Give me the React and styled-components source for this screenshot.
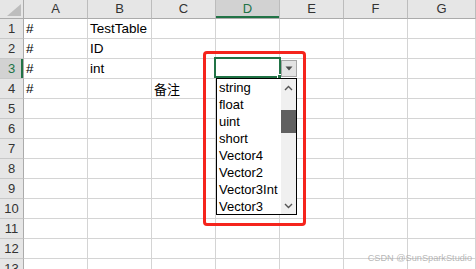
import React from "react";
import styled, { createGlobalStyle } from "styled-components";

const GREEN = "#217346";

const Global = createGlobalStyle`
  html, body { margin: 0; padding: 0; background: #fff; }
  #root { width: 476px; height: 269px; overflow: hidden; position: relative; }
`;

const Sheet = styled.div`
  display: grid;
  grid-template-columns: 24px repeat(6, 64px) 68px;
  grid-template-rows: 19px;
  grid-auto-rows: 20px;
  font-family: "Liberation Sans", Arial, sans-serif;
  width: 476px;
`;

const Corner = styled.div`
  box-sizing: border-box;
  background: #e6e6e6;
  border-right: 1px solid #ababab;
  border-bottom: 1px solid #ababab;
  display: flex;
  align-items: flex-end;
  justify-content: flex-end;
  padding: 0 1px 1px 0;
`;

const ColHeader = styled.div`
  box-sizing: border-box;
  background: ${(p) => (p.$active ? "#d2d2d2" : "#e6e6e6")};
  color: ${(p) => (p.$active ? GREEN : "#333")};
  border-right: 1px solid #bcbcbc;
  border-bottom: 1px solid #ababab;
  box-shadow: ${(p) => (p.$active ? `inset 0 -2px 0 ${GREEN}` : "none")};
  font-size: 13px;
  line-height: 18px;
  text-align: center;
`;

const RowHeader = styled.div`
  box-sizing: border-box;
  background: ${(p) => (p.$active ? "#d2d2d2" : "#e6e6e6")};
  color: ${(p) => (p.$active ? GREEN : "#333")};
  border-right: 1px solid #ababab;
  border-bottom: 1px solid #c8c8c8;
  box-shadow: ${(p) => (p.$active ? `inset -2px 0 0 ${GREEN}` : "none")};
  font-size: 13px;
  line-height: 19px;
  text-align: center;
`;

const Cell = styled.div`
  box-sizing: border-box;
  position: relative;
  border-right: 1px solid #d4d4d4;
  border-bottom: 1px solid #d4d4d4;
  padding: 1px 0 0 2px;
  font-size: 13.5px;
  line-height: 18px;
  color: #000;
  white-space: nowrap;
  font-family: ${(p) =>
    p.$cjk
      ? `"Noto Sans CJK SC", "Liberation Sans", sans-serif`
      : `"Liberation Sans", Arial, sans-serif`};
  font-size: ${(p) => (p.$cjk ? "13px" : "13.5px")};
`;

const Selection = styled.div`
  position: absolute;
  left: -2px;
  top: -2px;
  width: 67px;
  height: 21px;
  box-sizing: border-box;
  border: 2px solid ${GREEN};
  z-index: 3;
`;

const FillHandle = styled.div`
  position: absolute;
  right: -3px;
  bottom: -3px;
  width: 5px;
  height: 5px;
  background: ${GREEN};
  border: 1px solid #fff;
  box-sizing: border-box;
`;

const DropButton = styled.div`
  position: absolute;
  left: 65px;
  top: 1px;
  width: 16px;
  height: 17px;
  box-sizing: border-box;
  background: #e3e3e3;
  border: 1px solid #a6a6a6;
  display: flex;
  align-items: center;
  justify-content: center;
  z-index: 4;
`;

const ListBox = styled.div`
  position: absolute;
  left: 0;
  top: 19px;
  width: 81px;
  height: 137px;
  box-sizing: border-box;
  border: 1px solid #000;
  background: #fff;
  display: flex;
  z-index: 5;
`;

const Items = styled.div`
  flex: 1;
  display: flex;
  flex-direction: column;
  padding-left: 2px;
  overflow: hidden;
`;

const Item = styled.div`
  height: 17px;
  line-height: 17px;
  font-size: 13px;
  font-family: "Liberation Sans", Arial, sans-serif;
  color: #000;
  white-space: nowrap;
`;

const Scrollbar = styled.div`
  width: 15px;
  background: #f0f0f0;
  display: flex;
  flex-direction: column;
`;

const ScrollArrow = styled.div`
  height: 17px;
  display: flex;
  align-items: center;
  justify-content: center;
`;

const Track = styled.div`
  flex: 1;
`;

const Thumb = styled.div`
  margin-top: ${(p) => p.$offset}px;
  height: ${(p) => p.$size}px;
  background: #606060;
`;

const RedFrame = styled.div`
  position: absolute;
  left: -13px;
  top: -8px;
  width: 103px;
  height: 175px;
  box-sizing: border-box;
  border: 3px solid #f5241c;
  border-radius: 4px;
  z-index: 6;
  pointer-events: none;
`;

const Watermark = styled.div`
  position: absolute;
  right: 4px;
  bottom: 6px;
  font-family: "Liberation Sans", Arial, sans-serif;
  font-size: 9.2px;
  color: rgba(160, 160, 160, 0.75);
  white-space: nowrap;
`;

const cols = ["A", "B", "C", "D", "E", "F", "G"];

const data = {
  1: { A: "#", B: "TestTable" },
  2: { A: "#", B: "ID" },
  3: { A: "#", B: "int" },
  4: { A: "#", C: "备注" },
};

const options = [
  "string",
  "float",
  "uint",
  "short",
  "Vector4",
  "Vector2",
  "Vector3Int",
  "Vector3",
];

function Chevron({ up }) {
  return (
    <svg width="9" height="6" viewBox="0 0 9 6">
      <path
        d={up ? "M1 5 L4.5 1.5 L8 5" : "M1 1 L4.5 4.5 L8 1"}
        fill="none"
        stroke="#555"
        strokeWidth="1.4"
      />
    </svg>
  );
}

function Dropdown() {
  return (
    <>
      <Selection>
        <FillHandle />
      </Selection>
      <DropButton>
        <svg width="8" height="5" viewBox="0 0 8 5">
          <path d="M0.5 0.5 L7.5 0.5 L4 4.5 Z" fill="#4a4a4a" />
        </svg>
      </DropButton>
      <ListBox>
        <Items>
          {options.map((o) => (
            <Item key={o}>{o}</Item>
          ))}
        </Items>
        <Scrollbar>
          <ScrollArrow>
            <Chevron up />
          </ScrollArrow>
          <Track>
            <Thumb $offset={14} $size={23} />
          </Track>
          <ScrollArrow>
            <Chevron />
          </ScrollArrow>
        </Scrollbar>
      </ListBox>
      <RedFrame />
    </>
  );
}

export default function App() {
  const rows = Array.from({ length: 13 }, (_, i) => i + 1);
  return (
    <>
      <Global />
      <Sheet>
        <Corner>
          <svg width="15" height="13" viewBox="0 0 15 13">
            <polygon points="14,0 14,12 0,12" fill="#bdbdbd" />
          </svg>
        </Corner>
        {cols.map((c) => (
          <ColHeader key={c} $active={c === "D"}>
            {c}
          </ColHeader>
        ))}
        {rows.map((r) => (
          <React.Fragment key={r}>
            <RowHeader $active={r === 3}>{r}</RowHeader>
            {cols.map((c) => {
              const v = data[r] && data[r][c];
              const cjk = v && /[\u4e00-\u9fff]/.test(v);
              return (
                <Cell key={c} $cjk={cjk}>
                  {v}
                  {r === 3 && c === "D" && <Dropdown />}
                </Cell>
              );
            })}
          </React.Fragment>
        ))}
      </Sheet>
      <Watermark>CSDN @SunSparkStudio</Watermark>
    </>
  );
}
